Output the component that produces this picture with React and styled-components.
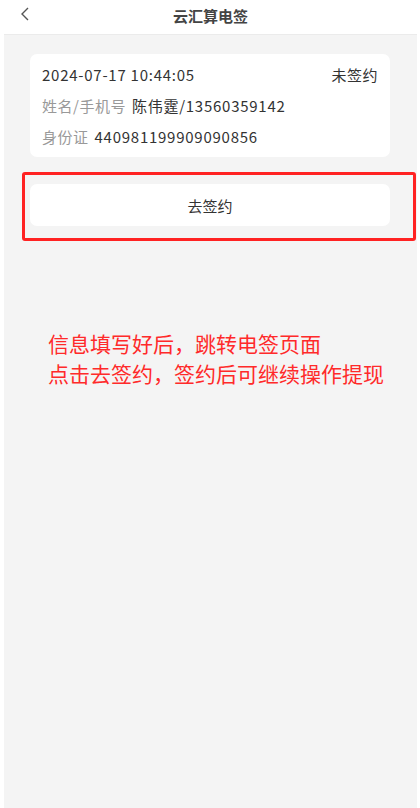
import React from "react";
import styled, { createGlobalStyle } from "styled-components";

const Global = createGlobalStyle`
  html, body { margin: 0; padding: 0; background: #fff; }
  body { font-family: "Noto Sans CJK SC", "Noto Sans", sans-serif; }
  #root { min-height: 808px; }
`;

const Page = styled.div`
  width: 413px;
  margin-left: 4px;
  min-height: 808px;
  display: flex;
  flex-direction: column;
  background: #f4f4f4;
`;

const Header = styled.header`
  height: 34px;
  background: #fff;
  border-bottom: 1px solid #ebebeb;
  display: flex;
  align-items: center;
  justify-content: center;
  position: relative;
`;

const Back = styled.button`
  position: absolute;
  left: 14px;
  top: 6px;
  width: 14px;
  height: 16px;
  padding: 0;
  border: 0;
  background: none;
  display: flex;
  align-items: center;
  justify-content: center;
`;

const Title = styled.h1`
  margin: 0;
  font-size: 15px;
  font-weight: 600;
  color: #444;
  line-height: 1;
  margin-top: -4px;
`;

const Content = styled.main`
  padding: 19px 27px 0 26px;
  display: flex;
  flex-direction: column;
`;

const Card = styled.section`
  background: #fff;
  border-radius: 7px;
  padding: 5px 12px 5px 12px;
  display: flex;
  flex-direction: column;
`;

const Row = styled.div`
  display: flex;
  align-items: center;
  justify-content: ${(p) => (p.$between ? "space-between" : "flex-start")};
  height: 31px;
  font-size: 15px;
  letter-spacing: 0.5px;
  color: #333;
`;

const Label = styled.span`
  color: #999;
  margin-right: 6px;
`;

const Value = styled.span`
  letter-spacing: 0.75px;
`;

const Highlight = styled.div`
  margin: 15px -26px 0 -8px;
  border: 3px solid #ff2222;
  border-radius: 3px;
  padding: 9px 23px 12px 5px;
`;

const ActionButton = styled.button`
  width: 100%;
  height: 42px;
  border: 0;
  border-radius: 7px;
  background: #fff;
  font-family: inherit;
  font-size: 15px;
  color: #333;
  cursor: pointer;
`;

const Note = styled.p`
  margin: 87px 0 0 18px;
  color: #ff2a2a;
  font-size: 21px;
  line-height: 30px;
`;

export default function App() {
  return (
    <>
      <Global />
      <Page>
        <Header>
          <Back aria-label="返回">
            <svg width="10" height="14" viewBox="0 0 10 14">
              <path d="M8 1 L2 7 L8 13" fill="none" stroke="#555" strokeWidth="1.4" />
            </svg>
          </Back>
          <Title>云汇算电签</Title>
        </Header>
        <Content>
          <Card>
            <Row $between>
              <Value>2024-07-17 10:44:05</Value>
              <span>未签约</span>
            </Row>
            <Row>
              <Label>姓名/手机号</Label>
              <Value>陈伟霆/13560359142</Value>
            </Row>
            <Row>
              <Label>身份证</Label>
              <Value>440981199909090856</Value>
            </Row>
          </Card>
          <Highlight>
            <ActionButton>去签约</ActionButton>
          </Highlight>
          <Note>
            信息填写好后，跳转电签页面
            <br />
            点击去签约，签约后可继续操作提现
          </Note>
        </Content>
      </Page>
    </>
  );
}
